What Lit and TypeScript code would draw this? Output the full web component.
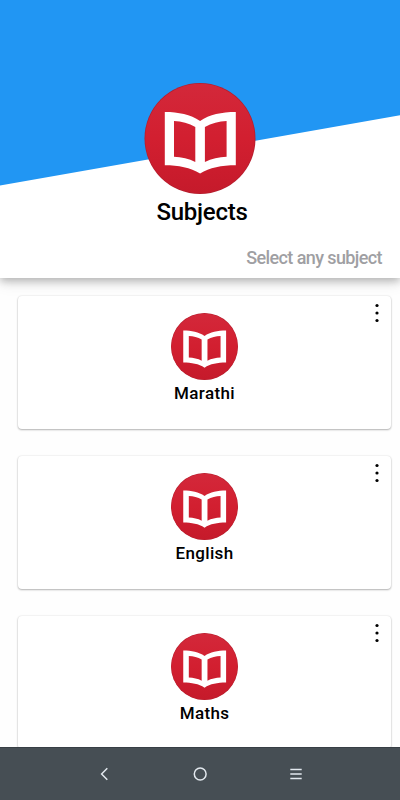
import { LitElement, html, css, svg } from "lit";
import { customElement, property } from "lit/decorators.js";

@customElement("book-badge")
class BookBadge extends LitElement {
  static styles = css`
    :host { display: block; }
    svg { display: block; width: 100%; height: 100%; }
  `;
  render() {
    return html`<svg viewBox="0 0 111 111">
      <defs>
        <linearGradient id="g" x1="0" y1="0" x2="0" y2="1">
          <stop offset="0" stop-color="#d3283a" />
          <stop offset="0.5" stop-color="#d21f30" />
          <stop offset="1" stop-color="#c51a2b" />
        </linearGradient>
      </defs>
      <circle cx="55.5" cy="55.5" r="55.5" fill="#b51d2d" />
      <circle cx="55.5" cy="55.5" r="54.7" fill="url(#g)" />
      <path fill="#fff" fill-rule="evenodd"
        d="M20.3 29C34 29 46 31.5 55.6 38C65 31.5 77 29 91.3 29V82.2C77 82.2 65 84.5 55.6 90.6C46 84.5 34 82.2 20.3 82.2Z
           M29.5 37.9V73.8C37 74 44.5 75.8 50.8 79V44C44.5 40 37 38.1 29.5 37.9Z
           M82.1 37.9V73.8C74.5 74 67 75.8 60.4 79V44C67 40 74.5 38.1 82.1 37.9Z" />
    </svg>`;
  }
}

@customElement("subject-card")
class SubjectCard extends LitElement {
  @property() name = "";
  static styles = css`
    :host {
      display: flex; flex-direction: column; align-items: center;
      position: relative; flex: none; box-sizing: border-box;
      height: 133.5px; padding-top: 17.5px;
      background: #fff; border-radius: 4px;
      box-shadow: 0 1px 2px rgba(0,0,0,.28), 0 0 2px rgba(0,0,0,.12);
    }
    .badge { width: 67px; height: 67px; }
    .name { margin-top: 2px; font-size: 17px; line-height: 22px; font-weight: 500; letter-spacing: .35px; color: #000; }
    .more { position: absolute; right: 12px; top: 7px; width: 4px; height: 20px; }
  `;
  render() {
    return html`
      <book-badge class="badge"></book-badge>
      <div class="name">${this.name}</div>
      <svg class="more" viewBox="0 0 4 20">
        ${[2.5, 10, 17.5].map((y) => svg`<circle cx="2" cy=${y} r="1.6" fill="#000" />`)}
      </svg>`;
  }
}

@customElement("app-root")
class AppRoot extends LitElement {
  static styles = css`
    :host {
      display: flex; flex-direction: column; height: 800px; overflow: hidden;
      background: #fefefe; font-family: Roboto, "Noto Sans", sans-serif;
    }
    .header {
      position: relative; z-index: 1; flex: none; box-sizing: border-box;
      height: 277.5px; padding-top: 83px; background: #fff;
      display: flex; flex-direction: column; align-items: center;
      box-shadow: 0 3px 8px rgba(0,0,0,.25), 0 6px 14px rgba(0,0,0,.08);
    }
    .slope { position: absolute; left: 0; top: 0; width: 400px; height: 186px; }
    .badge { position: relative; width: 112px; height: 111px; }
    .title { margin: 4px 0 0 4px; font-size: 24px; line-height: 28px; font-weight: 500; letter-spacing: -.25px; color: #000; }
    .hint {
      align-self: flex-end; margin: 21px 18px 0 0;
      font-size: 18px; line-height: 22px; font-weight: 500; letter-spacing: -.6px; color: #9f9fa3;
    }
    .list {
      flex: 1; min-height: 0; overflow: hidden; box-sizing: border-box;
      padding: 18px 9px 0 18px; display: flex; flex-direction: column; gap: 26.5px;
    }
    .nav {
      position: relative; z-index: 1; flex: none; box-sizing: border-box; height: 53px;
      background: #464e54; border-top: 1px solid #383f45;
      display: flex; align-items: center; justify-content: center; gap: 80px;
    }
    .nav svg { width: 16px; height: 16px; fill: none; stroke: #e2e8ee; stroke-width: 1.5; }
  `;
  render() {
    return html`
      <div class="header">
        <svg class="slope" viewBox="0 0 400 186"><path d="M0 0H400V115.3L0 185.5Z" fill="#2196f3" /></svg>
        <book-badge class="badge"></book-badge>
        <div class="title">Subjects</div>
        <div class="hint">Select any subject</div>
      </div>
      <div class="list">
        ${["Marathi", "English", "Maths"].map((n) => html`<subject-card .name=${n}></subject-card>`)}
      </div>
      <div class="nav">
        <svg viewBox="0 0 16 16"><path d="M11.3 2.3L5.6 8L11.3 13.7" /></svg>
        <svg viewBox="0 0 16 16"><circle cx="8.2" cy="8" r="5.9" /></svg>
        <svg viewBox="0 0 16 16"><path d="M2.3 3.5H13.7M2.3 8H13.7M2.3 12.5H13.7" /></svg>
      </div>`;
  }
}
